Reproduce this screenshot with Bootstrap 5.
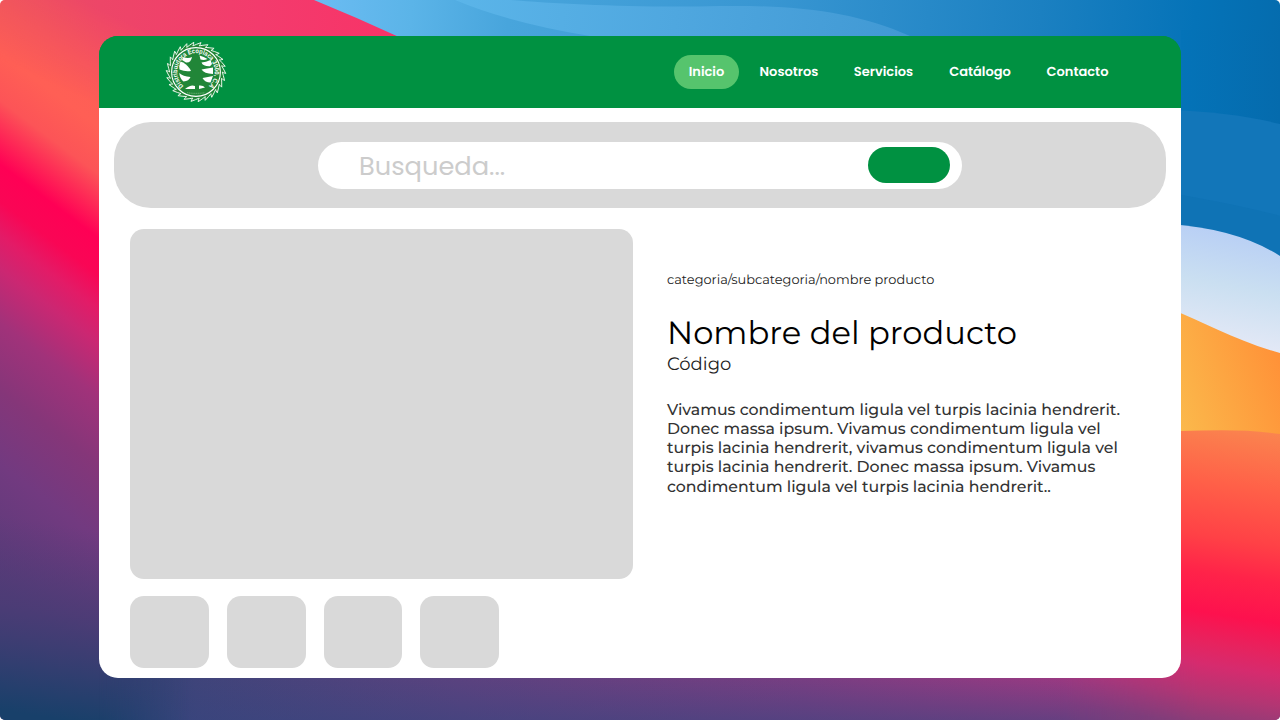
<!DOCTYPE html>
<html lang="es">
<head>
<meta charset="utf-8">
<meta name="viewport" content="width=device-width, initial-scale=1">
<title>Nombre del producto</title>
<link href="https://cdn.jsdelivr.net/npm/bootstrap@5.3.0/dist/css/bootstrap.min.css" rel="stylesheet">
<style>
body{font-family:Montserrat,Inter,sans-serif;background:#fff;overflow:hidden;text-rendering:geometricPrecision}
.desk{width:1280px;height:720px;border-radius:5px;padding:36px 99px 42px}
.wall{inset:0;z-index:0}
.shell{z-index:1;border-radius:19px;height:642px;background:linear-gradient(#009141 71px,#fff 0)}
.topbar{background:#009141;height:71.5px;padding:0 58px 0 66px}
.topbar .nav-link{font:600 13px/34px Poppins,Inter,sans-serif;color:#fff;padding:0;white-space:nowrap;text-align:center;border-radius:17px;height:34px}
.topbar .nav-link.active{background:#56c46d;color:#fff}
.finder{background:#d9d9d9;border-radius:37px;height:86px;margin:14.5px 15px 0}
.field{width:644px;height:47px;border-radius:24px;padding:0 12px 0 41px}
.field input{font:400 25.7px/40px Poppins,Inter,sans-serif;color:#ccc;margin-top:2px}
.field input::placeholder{color:#ccc;opacity:1}
.go{width:82px;height:36.5px;background:#009141;border-radius:18px}
.product{margin:20.5px 0 0 31.4px;gap:34.1px}
.gallery{width:502.5px}
.photo{height:350.5px;border-radius:14px;background:#d9d9d9}
.thumbs{margin-top:17px;gap:17.7px}
.thumb{width:78.9px;height:71.5px;border-radius:14px;background:#d9d9d9}
.info{padding-top:41px;color:#000;white-space:nowrap}
.path{font-size:12.92px;line-height:20px;color:#222}
.info h1{font-size:32.2px;line-height:42px;font-weight:400;margin:23.5px 0 0}
.code{font-size:18px;line-height:22px;color:#222;margin-top:-2.5px}
.desc{font-size:15.76px;line-height:19.3px;margin-top:25px;color:#333;font-weight:500}
</style>
</head>
<body>
<div class="desk position-relative overflow-hidden">
<svg class="wall position-absolute" width="1280" height="720" viewBox="0 0 1280 720" aria-hidden="true">
<defs>
<linearGradient id="leftlong" gradientUnits="userSpaceOnUse" x1="60" y1="-10" x2="-264" y2="422">
<stop offset="0" stop-color="#fb5d57"/><stop offset=".16" stop-color="#ff5f55"/><stop offset=".23" stop-color="#fc5457"/><stop offset=".325" stop-color="#ff0055"/><stop offset=".38" stop-color="#f90655"/><stop offset=".43" stop-color="#e31b67"/><stop offset=".48" stop-color="#cb2772"/><stop offset=".56" stop-color="#a1327a"/><stop offset=".66" stop-color="#853679"/><stop offset=".77" stop-color="#723a80"/><stop offset=".95" stop-color="#573b78"/>
</linearGradient>
<linearGradient id="lowfade" gradientUnits="userSpaceOnUse" x1="30" y1="520" x2="0" y2="710"><stop offset="0" stop-color="#563b78" stop-opacity="0"/><stop offset=".45" stop-color="#493c75" stop-opacity=".8"/><stop offset=".75" stop-color="#323e70"/><stop offset="1" stop-color="#18406a"/></linearGradient>
<linearGradient id="top" gradientUnits="userSpaceOnUse" x1="0" y1="0" x2="400" y2="0"><stop offset="0" stop-color="#ea5160"/><stop offset=".25" stop-color="#ed4668"/><stop offset=".65" stop-color="#f33b6d"/><stop offset="1" stop-color="#f83367"/></linearGradient>
<linearGradient id="topmask" gradientUnits="userSpaceOnUse" x1="92" y1="5" x2="55" y2="85"><stop offset="0" stop-color="#fff"/><stop offset="1" stop-color="#fff" stop-opacity="0"/></linearGradient>
<mask id="tm"><path fill="url(#topmask)" d="M0 0H420V130H0z"/></mask>
<linearGradient id="sky" gradientUnits="userSpaceOnUse" x1="315" y1="0" x2="1280" y2="60"><stop offset="0" stop-color="#6bbcf2"/><stop offset=".1" stop-color="#5bb4e8"/><stop offset=".2" stop-color="#48a5dc"/><stop offset=".47" stop-color="#3896d2"/><stop offset=".75" stop-color="#1b80c1"/><stop offset=".91" stop-color="#0573b8"/><stop offset="1" stop-color="#056cae"/></linearGradient>
<linearGradient id="deep" gradientUnits="userSpaceOnUse" x1="1181" y1="0" x2="1280" y2="0"><stop offset="0" stop-color="#0473b8"/><stop offset="1" stop-color="#056bad"/></linearGradient>
<linearGradient id="wave" gradientUnits="userSpaceOnUse" x1="450" y1="0" x2="900" y2="50"><stop offset="0" stop-color="#5bb5e9"/><stop offset=".5" stop-color="#4fa7df"/><stop offset="1" stop-color="#4199d4"/></linearGradient>
<linearGradient id="ice" gradientUnits="userSpaceOnUse" x1="1240" y1="232" x2="1220" y2="340"><stop offset="0" stop-color="#b8cff5"/><stop offset=".5" stop-color="#cadff1"/><stop offset="1" stop-color="#e2e8f6"/></linearGradient>
<linearGradient id="gold" x1="0" y1=".8" x2="1" y2=".4"><stop offset="0" stop-color="#fbba4c"/><stop offset="1" stop-color="#ff9238"/></linearGradient>
<linearGradient id="hot" gradientUnits="userSpaceOnUse" x1="1245" y1="425" x2="1200" y2="725"><stop offset="0" stop-color="#fa864f"/><stop offset=".2" stop-color="#ff6148"/><stop offset=".38" stop-color="#ff4146"/><stop offset=".5" stop-color="#ff2349"/><stop offset=".63" stop-color="#fd114e"/><stop offset=".73" stop-color="#e6235f"/><stop offset=".8" stop-color="#d62b6e"/><stop offset=".9" stop-color="#b23673"/><stop offset="1" stop-color="#873d78"/></linearGradient>
<linearGradient id="base" gradientUnits="userSpaceOnUse" x1="60" y1="714" x2="1200" y2="620"><stop offset="0" stop-color="#1b416b"/><stop offset=".12" stop-color="#3f447a"/><stop offset=".35" stop-color="#5a427f"/><stop offset=".65" stop-color="#783e82"/><stop offset=".85" stop-color="#953a82"/><stop offset="1" stop-color="#b0367f"/></linearGradient>
<linearGradient id="basedark" gradientUnits="userSpaceOnUse" x1="0" y1="678" x2="0" y2="724"><stop offset="0" stop-color="#35457f" stop-opacity="0"/><stop offset="1" stop-color="#35457f" stop-opacity=".55"/></linearGradient>
<linearGradient id="m" gradientUnits="userSpaceOnUse" x1="99" y1="0" x2="190" y2="0"><stop offset="0" stop-color="#fff" stop-opacity="0"/><stop offset="1" stop-color="#fff"/></linearGradient>
<linearGradient id="m2" gradientUnits="userSpaceOnUse" x1="1060" y1="0" x2="1200" y2="0"><stop offset="0" stop-color="#fff" stop-opacity="0"/><stop offset="1" stop-color="#fff"/></linearGradient>
<mask id="bm"><path fill="url(#m)" d="M0 400H1280V720H0z"/></mask><mask id="rm"><path fill="url(#m2)" d="M1050 400H1280V720H1050z"/><path fill="#fff" d="M1181 400H1280V660H1181z"/></mask>
</defs>
<path fill="url(#leftlong)" d="M0 0H420V720H0z"/>
<path fill="url(#top)" mask="url(#tm)" d="M0 0H420V130H0z"/>
<path fill="url(#lowfade)" d="M0 490H420V720H0z"/>
<g mask="url(#bm)"><path fill="url(#base)" d="M0 655H1280V720H0z"/><path fill="url(#basedark)" d="M0 655H1280V720H0z"/></g>
<path fill="url(#sky)" d="M314 0Q358 18 399 37V60H1280V0z"/>
<path fill="url(#wave)" d="M455 0Q510 23 590 36H910C855 12 800 5 720 6C640 8 560 4 510 0z"/>
<path fill="url(#deep)" d="M1181 30H1280V270H1181z"/><path fill="#1276b9" d="M1170 110Q1232 112 1280 124V270H1170z"/><path fill="#0b70b2" opacity=".5" d="M1170 193Q1240 205 1280 216V270H1170z"/>
<path fill="url(#ice)" d="M1170 224Q1238 229 1280 256V354H1170z"/>
<path fill="url(#gold)" d="M1170 309C1205 322 1236 341 1280 353V435H1170z"/>
<g mask="url(#rm)"><path fill="url(#hot)" d="M1050 431H1181C1215 430 1247 429 1280 434V720H1050z"/></g>
</svg>
<main class="shell position-relative overflow-hidden">
<nav class="topbar navbar navbar-expand d-flex flex-nowrap justify-content-between">
<a class="navbar-brand p-0 m-0 d-flex" href="#" aria-label="Distribuidora Ecoplaca 3000">
<svg width="62" height="62" viewBox="-31 -31 62 62">
<path id="saw" fill="#218638" stroke="#e9f6ea" stroke-width="1"/>
<circle r="24.4" fill="#218638" stroke="#fff" stroke-width="1.1"/>
<g fill="#fff">
<path d="M-12.500-15Q-8-13-4-15Q-5-9-10-9.500L-14-12z"/>
<path d="M-15.500-10.500Q-10-9-6-3L-5-1Q-11 0-16.500-2.500Q-17.500-6-15.500-10.500z"/>
<path d="M-16.800 1Q-13 4.500-5.500 5Q-7 9-12.500 9.500Q-16 7-16.800 1z"/>
<path d="M-11 17Q-5 12-1 14V17z"/>
<path d="M3.500-16.500Q8-15.500 11.500-13Q8-11.500 4.500-12.500z"/>
<path d="M14.500-12Q10-10 5.500-9.500Q7-5.500 14-5.800L16-8z"/>
<path d="M17-4.500Q11-3.500 5.500-2.500Q8 1.500 17 2z"/>
<path d="M17 4Q12 5 6.500 6Q9 10.500 14.500 10.500z"/>
<path d="M3 13.500Q7 13 9 15.500L3 17z"/>
</g>
<path id="ring" fill="none" d="M-12.500 14A18.800 18.800 0 1 1 12.500 14"/>
<text fill="#fff" font-family="Liberation Sans, sans-serif" font-size="6.6" font-weight="700"><textPath href="#ring" textLength="90" lengthAdjust="spacingAndGlyphs">Distribuidora Ecoplaca 3000, C.A</textPath></text>
<path d="M-9 20.700Q0 22 9 20.700" fill="none" stroke="#9acb9e" stroke-width=".6" stroke-dasharray="1.2 .6"/>
</svg></a>
<div class="navbar-nav align-items-center">
<a class="nav-link active" style="width:65px" href="#">Inicio</a>
<a class="nav-link" style="width:100px" href="#">Nosotros</a>
<a class="nav-link" style="width:89px" href="#">Servicios</a>
<a class="nav-link" style="width:104px" href="#">Catálogo</a>
<a class="nav-link" style="width:91px" href="#">Contacto</a>
</div>
</nav>
<div class="finder d-flex align-items-center justify-content-center">
<form class="field bg-white d-flex align-items-center">
<input class="border-0 bg-transparent p-0 flex-grow-1" type="text" placeholder="Busqueda..." aria-label="Busqueda">
<button class="go border-0 p-0" type="button" aria-label="Buscar"></button>
</form>
</div>
<section class="product d-flex">
<div class="gallery flex-shrink-0">
<div class="photo"></div>
<div class="thumbs d-flex"><div class="thumb"></div><div class="thumb"></div><div class="thumb"></div><div class="thumb"></div></div>
</div>
<div class="info">
<div class="path">categoria/subcategoria/nombre producto</div>
<h1>Nombre del producto</h1>
<div class="code">Código</div>
<p class="desc mb-0">Vivamus condimentum ligula vel turpis lacinia hendrerit.<br>Donec massa ipsum. Vivamus condimentum ligula vel<br>turpis lacinia hendrerit, vivamus condimentum ligula vel<br>turpis lacinia hendrerit. Donec massa ipsum. Vivamus<br>condimentum ligula vel turpis lacinia hendrerit..</p>
</div>
</section>
</main>
</div>
<script src="https://cdn.jsdelivr.net/npm/bootstrap@5.3.0/dist/js/bootstrap.bundle.min.js"></script>
<script>
// Saw blade rim: evenly spaced hooked teeth
const teeth = 26, pt = (r, a) => (r * Math.cos(a)).toFixed(2) + ' ' + (r * Math.sin(a)).toFixed(2);
let d = '';
for (let i = 0; i < teeth; i++) {
  const a = i * 2 * Math.PI / teeth, s = 2 * Math.PI / teeth;
  d += (i ? 'L' : 'M') + pt(26.3, a) + 'L' + pt(27.6, a + s * .55) + 'L' + pt(29.8, a + s * 1.2) + 'L' + pt(27.4, a + s * 1.1);
}
document.getElementById('saw').setAttribute('d', d + 'Z');
</script>
</body>
</html>
